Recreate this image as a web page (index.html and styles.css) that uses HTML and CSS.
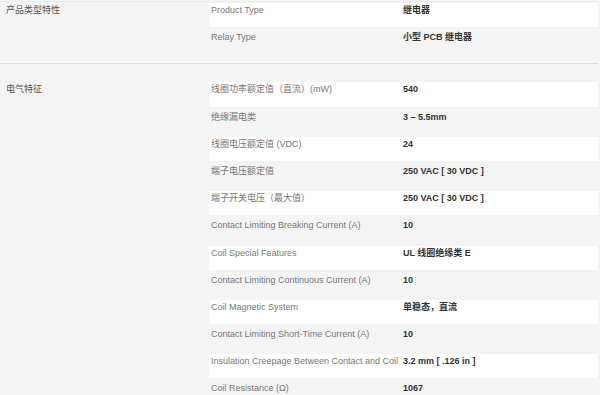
FILE: index.html
```html
<!DOCTYPE html>
<html lang="zh">
<head>
    <meta charset="UTF-8">
    <title>产品规格</title>
    <link rel="stylesheet" href="styles.css">
</head>
<body>

<div class="specs">

    <section class="group">
        <div class="group-title">产品类型特性</div>
        <ul class="rows">
            <li class="row"><span class="label">Product Type</span><span class="value">继电器</span></li>
            <li class="row"><span class="label">Relay Type</span><span class="value">小型 PCB 继电器</span></li>
        </ul>
    </section>

    <section class="group">
        <div class="group-title">电气特征</div>
        <ul class="rows">
            <li class="row"><span class="label">线圈功率额定值（直流）(mW)</span><span class="value">540</span></li>
            <li class="row"><span class="label">绝缘漏电类</span><span class="value">3 – 5.5mm</span></li>
            <li class="row"><span class="label">线圈电压额定值 (VDC)</span><span class="value">24</span></li>
            <li class="row"><span class="label">端子电压额定值</span><span class="value">250 VAC [ 30 VDC ]</span></li>
            <li class="row"><span class="label">端子开关电压（最大值）</span><span class="value">250 VAC [ 30 VDC ]</span></li>
            <li class="row"><span class="label">Contact Limiting Breaking Current (A)</span><span class="value">10</span></li>
            <li class="row"><span class="label">Coil Special Features</span><span class="value">UL 线圈绝缘类 E</span></li>
            <li class="row"><span class="label">Contact Limiting Continuous Current (A)</span><span class="value">10</span></li>
            <li class="row"><span class="label">Coil Magnetic System</span><span class="value">单稳态，直流</span></li>
            <li class="row"><span class="label">Contact Limiting Short-Time Current (A)</span><span class="value">10</span></li>
            <li class="row"><span class="label">Insulation Creepage Between Contact and Coil</span><span class="value">3.2 mm [ .126 in ]</span></li>
            <li class="row"><span class="label">Coil Resistance (Ω)</span><span class="value">1067</span></li>
        </ul>
    </section>

</div>

</body>
</html>
```

FILE: styles.css
```css
body {
    margin: 0;
    background-color: #f4f4f4;
    font-family: "Liberation Sans", "Noto Sans CJK SC", sans-serif;
    font-size: 9px;
    color: #777777;
}

.specs {
    margin-right: 2px;
    border-top: 1px solid #ebebeb;
    margin-top: 1px;
}

.group {
    display: flex;
    padding: 1px 0 9px 0;
}

.group + .group {
    border-top: 1px solid #dcdcdc;
    padding-top: 18px;
}

.group-title {
    width: 203px;
    padding-left: 6px;
    line-height: 14px;
    color: #555555;
}

.rows {
    flex: 1;
    list-style: none;
    margin: 0;
    padding: 0;
}

.row {
    display: flex;
    height: 24.2px;
    margin-bottom: 3px;
    padding-left: 2px;
    line-height: 14px;
}

.row:nth-child(odd) {
    background-color: #ffffff;
}

.row:last-child {
    margin-bottom: 0;
}

.label {
    width: 192px;
    white-space: nowrap;
}

.value {
    font-weight: bold;
    color: #333333;
    white-space: nowrap;
}
```
